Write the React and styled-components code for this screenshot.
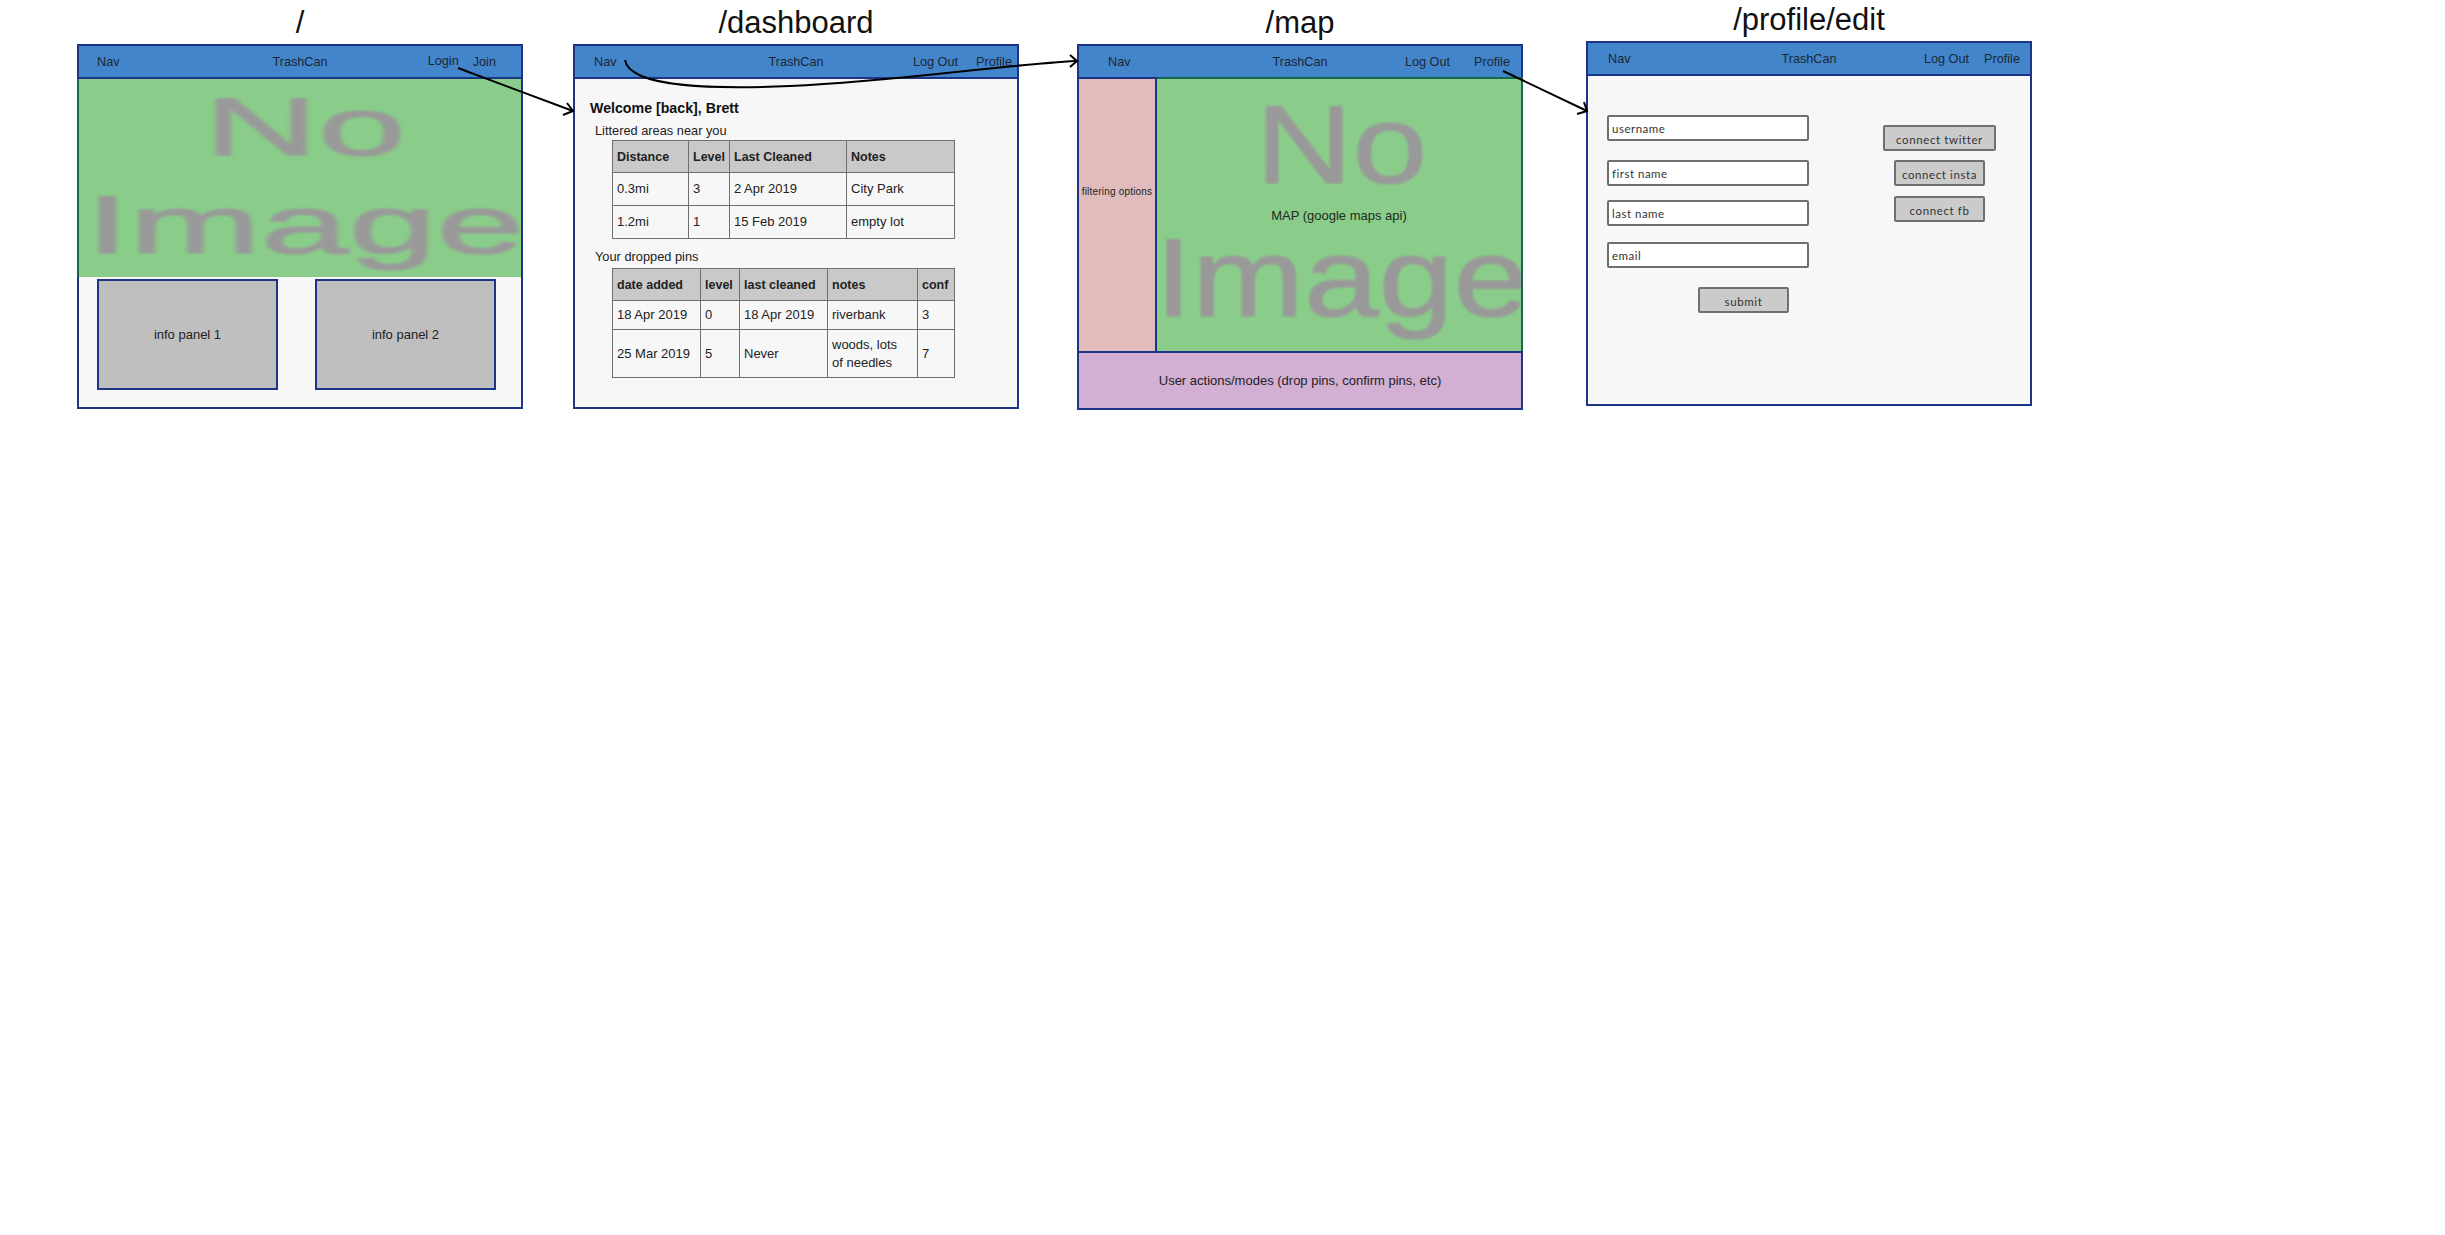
// App.jsx
import React from 'react';
import styled, { createGlobalStyle } from 'styled-components';

const navy = '#1d3587';
const darkGreen = '#17664f';

const Global = createGlobalStyle`
	html, body {
		margin: 0;
		background: #fff;
	}
	body {
		font-family: 'Liberation Sans', Arial, sans-serif;
		color: #222;
	}
`;

const Canvas = styled.div`
	position: relative;
	width: 2445px;
	height: 1235px;
	display: flex;
	align-items: flex-start;
	padding-left: 77px;
	box-sizing: border-box;
	overflow: hidden;
`;

const Screen = styled.section`
	width: 446px;
	margin-left: ${(p) => p.$left || 0}px;
	margin-top: ${(p) => p.$top || 0}px;
`;

const Title = styled.h2`
	margin: 0;
	height: 44px;
	padding-top: 4px;
	box-sizing: border-box;
	font-size: 31px;
	line-height: 38px;
	font-weight: 400;
	text-align: center;
	color: #111;
`;

const Frame = styled.div`
	width: 446px;
	height: ${(p) => p.$h || 365}px;
	box-sizing: border-box;
	border: 2px solid ${navy};
	background: #f7f7f7;
	display: flex;
	flex-direction: column;
`;

const Nav = styled.header`
	flex: none;
	height: 33px;
	box-sizing: border-box;
	background: #4285cb;
	border-bottom: 2px solid ${navy};
	display: grid;
	grid-template-columns: 1fr auto 1fr;
	align-items: center;
	font-size: 12.7px;
	color: #1c2733;
`;

const NavLeft = styled.div`
	padding-left: ${(p) => p.$left}px;
`;

const NavRight = styled.div`
	display: flex;
	justify-content: flex-end;
	gap: ${(p) => p.$gap}px;
	padding-right: ${(p) => p.$right}px;
`;

const NavLink = styled.span`
	margin-top: ${(p) => p.$drop || 0}px;
`;

const Hero = styled.div`
	position: relative;
	flex: none;
	height: 198px;
	margin-left: -2px;
	background: #8acd8a;
	border-left: 2px solid ${darkGreen};
	overflow: hidden;
`;

const Watermark = styled.div`
	position: absolute;
	inset: 0;
	display: flex;
	flex-direction: column;
	align-items: center;
	padding-left: ${(p) => p.$shift}px;
	font-size: ${(p) => p.$size}px;
	line-height: ${(p) => p.$lh}px;
	color: #999;
	-webkit-text-stroke: 1.2px #999;
	white-space: nowrap;
	filter: blur(1.1px);
	transform: translateY(${(p) => p.$top}px) scaleX(${(p) => p.$stretch});
`;

const Panels = styled.div`
	display: flex;
	gap: 37px;
	padding: 2px 0 0 18px;
`;

const InfoPanel = styled.div`
	width: 181px;
	height: 111px;
	box-sizing: border-box;
	border: 2px solid ${navy};
	background: #bfbfbf;
	display: flex;
	align-items: center;
	justify-content: center;
	font-size: 13px;
`;

const DashBody = styled.div`
	padding: 21px 0 0 15px;
`;

const Welcome = styled.h3`
	margin: 0;
	font-size: 14.2px;
	line-height: 17px;
	font-weight: 700;
	color: #111;
`;

const Caption = styled.p`
	margin: ${(p) => p.$top}px 0 0 5px;
	font-size: 12.8px;
	line-height: 16px;
`;

const Table = styled.table`
	margin: ${(p) => p.$top}px 0 0 22px;
	border-collapse: collapse;
	table-layout: fixed;
	width: 342px;
	font-size: 13px;
	color: #222;

	th,
	td {
		border: 1px solid #6f6f6f;
		padding: 0 4px;
		text-align: left;
		line-height: 18px;
	}
	th {
		background: #c9c9c9;
		font-size: 12.5px;
		font-weight: 700;
		height: 31px;
	}
`;

const Row = styled.tr`
	height: ${(p) => p.$h}px;
`;

const MapRow = styled.div`
	flex: none;
	height: 272px;
	display: flex;
`;

const Filters = styled.aside`
	flex: none;
	width: 78px;
	box-sizing: border-box;
	background: #e0bcbc;
	border-right: 2px solid ${navy};
	display: flex;
	align-items: center;
	justify-content: center;
	padding-bottom: 47px;
	font-size: 10px;
	letter-spacing: 0.2px;
	white-space: nowrap;
`;

const MapArea = styled.div`
	position: relative;
	flex: 1;
	margin: -2px -2px 0 0;
	background: #8acd8a;
	border-top: 2px solid ${darkGreen};
	border-right: 2px solid ${darkGreen};
	overflow: hidden;
`;

const MapLabel = styled.div`
	position: absolute;
	inset: 0;
	display: flex;
	align-items: center;
	justify-content: center;
	font-size: 13px;
	color: #1e2a22;
`;

const Actions = styled.div`
	flex: 1;
	background: #d3afd3;
	border-top: 2px solid ${navy};
	display: flex;
	align-items: center;
	justify-content: center;
	font-size: 13px;
`;

const FormBody = styled.div`
	display: flex;
	gap: 74px;
	padding-left: 19px;
`;

const FormColumn = styled.div`
	width: 202px;
	padding-top: 39px;
	display: flex;
	flex-direction: column;
`;

const Field = styled.div`
	height: 26px;
	margin-top: ${(p) => p.$top || 0}px;
	box-sizing: border-box;
	border: 2px solid #6f6f6f;
	border-radius: 2px;
	background: #fff;
	padding-left: 3px;
	display: flex;
	align-items: center;
	font-family: 'Lato', sans-serif;
	font-size: 11.5px;
	letter-spacing: 0.5px;
	color: #333;
`;

const SketchButton = styled.div`
	width: ${(p) => p.$w || 91}px;
	height: 26px;
	margin-top: ${(p) => p.$top || 0}px;
	margin-left: ${(p) => p.$left || 0}px;
	box-sizing: border-box;
	border: 2px solid #6f6f6f;
	border-radius: 2px;
	background: #cbcbcb;
	padding-top: 2px;
	display: flex;
	align-items: center;
	justify-content: center;
	font-family: 'Lato', sans-serif;
	font-size: 11.5px;
	letter-spacing: 0.6px;
	color: #333;
`;

const ButtonColumn = styled.div`
	width: 113px;
	padding-top: 49px;
	display: flex;
	flex-direction: column;
`;

const Arrows = styled.svg`
	position: absolute;
	left: 0;
	top: 0;
	width: 2445px;
	height: 1235px;
	pointer-events: none;
`;

const TopNav = ({ left, right, gap, links }) => (
	<Nav>
		<NavLeft $left={left}>Nav</NavLeft>
		<span>TrashCan</span>
		<NavRight
			$gap={gap}
			$right={right}
		>
			{links.map((l) => (
				<NavLink
					key={l.label}
					$drop={l.drop}
				>
					{l.label}
				</NavLink>
			))}
		</NavRight>
	</Nav>
);

const nearYou = [
	['0.3mi', '3', '2 Apr 2019', 'City Park'],
	['1.2mi', '1', '15 Feb 2019', 'empty lot'],
];

const pins = [
	{ h: 29, cells: ['18 Apr 2019', '0', '18 Apr 2019', 'riverbank', '3'] },
	{
		h: 48,
		cells: [
			'25 Mar 2019',
			'5',
			'Never',
			<>
				woods, lots
				<br />
				of needles
			</>,
			'7',
		],
	},
];

function App() {
	return (
		<Canvas>
			<Global />

			<Screen>
				<Title>/</Title>
				<Frame>
					<TopNav
						left={18}
						right={25}
						gap={14}
						links={[{ label: 'Login' }, { label: 'Join', drop: 1 }]}
					/>
					<Hero>
						<Watermark
							$size={81}
							$lh={98}
							$top={-1}
							$shift={5}
							$stretch={1.95}
						>
							<span>No</span>
							<span>Image</span>
						</Watermark>
					</Hero>
					<Panels>
						<InfoPanel>info panel 1</InfoPanel>
						<InfoPanel>info panel 2</InfoPanel>
					</Panels>
				</Frame>
			</Screen>

			<Screen $left={50}>
				<Title>/dashboard</Title>
				<Frame>
					<TopNav
						left={19}
						right={5}
						gap={18}
						links={[{ label: 'Log Out' }, { label: 'Profile' }]}
					/>
					<DashBody>
						<Welcome>Welcome [back], Brett</Welcome>
						<Caption $top={6}>Littered areas near you</Caption>
						<Table $top={1}>
							<colgroup>
								<col width="76" />
								<col width="41" />
								<col width="117" />
								<col width="108" />
							</colgroup>
							<thead>
								<tr>
									<th>Distance</th>
									<th>Level</th>
									<th>Last Cleaned</th>
									<th>Notes</th>
								</tr>
							</thead>
							<tbody>
								{nearYou.map((r) => (
									<Row
										key={r[0]}
										$h={33}
									>
										{r.map((c) => (
											<td key={c}>{c}</td>
										))}
									</Row>
								))}
							</tbody>
						</Table>
						<Caption $top={10}>Your dropped pins</Caption>
						<Table $top={3}>
							<colgroup>
								<col width="88" />
								<col width="39" />
								<col width="88" />
								<col width="90" />
								<col width="37" />
							</colgroup>
							<thead>
								<tr>
									<th>date added</th>
									<th>level</th>
									<th>last cleaned</th>
									<th>notes</th>
									<th>conf</th>
								</tr>
							</thead>
							<tbody>
								{pins.map((r) => (
									<Row
										key={r.cells[0]}
										$h={r.h}
									>
										{r.cells.map((c, i) => (
											<td key={i}>{c}</td>
										))}
									</Row>
								))}
							</tbody>
						</Table>
					</DashBody>
				</Frame>
			</Screen>

			<Screen $left={58}>
				<Title>/map</Title>
				<Frame $h={366}>
					<TopNav
						left={29}
						right={11}
						gap={24}
						links={[
							{ label: 'Log Out', drop: 1 },
							{ label: 'Profile', drop: 1 },
						]}
					/>
					<MapRow>
						<Filters>filtering options</Filters>
						<MapArea>
							<Watermark
								$size={112}
								$lh={133}
								$top={-1}
								$shift={4}
								$stretch={1.2}
							>
								<span>No</span>
								<span>Image</span>
							</Watermark>
							<MapLabel>MAP (google maps api)</MapLabel>
						</MapArea>
					</MapRow>
					<Actions>User actions/modes (drop pins, confirm pins, etc)</Actions>
				</Frame>
			</Screen>

			<Screen $left={63} $top={-3}>
				<Title>/profile/edit</Title>
				<Frame>
					<TopNav
						left={20}
						right={10}
						gap={15}
						links={[{ label: 'Log Out' }, { label: 'Profile' }]}
					/>
					<FormBody>
						<FormColumn>
							<Field>username</Field>
							<Field $top={19}>first name</Field>
							<Field $top={14}>last name</Field>
							<Field $top={16}>email</Field>
							<SketchButton
								$top={19}
								$left={91}
							>
								submit
							</SketchButton>
						</FormColumn>
						<ButtonColumn>
							<SketchButton $w={113}>connect twitter</SketchButton>
							<SketchButton
								$top={9}
								$left={11}
							>
								connect insta
							</SketchButton>
							<SketchButton
								$top={10}
								$left={11}
							>
								connect fb
							</SketchButton>
						</ButtonColumn>
					</FormBody>
				</Frame>
			</Screen>

			<Arrows viewBox="0 0 2445 1235">
				<g
					fill="none"
					stroke="#000"
					strokeWidth="2"
				>
					<path d="M458 68 L573 111" />
					<path d="M567 103 L573 111 L563 115" />
					<path d="M625 60 C630 89 720 89 790 86 C900 81 990 66 1076 61" />
					<path d="M1070 55 L1077 61 L1070 67" />
					<path d="M1503 71 L1587 111" />
					<path d="M1584 102 L1587 111 L1577 114" />
				</g>
			</Arrows>
		</Canvas>
	);
}

export default App;
